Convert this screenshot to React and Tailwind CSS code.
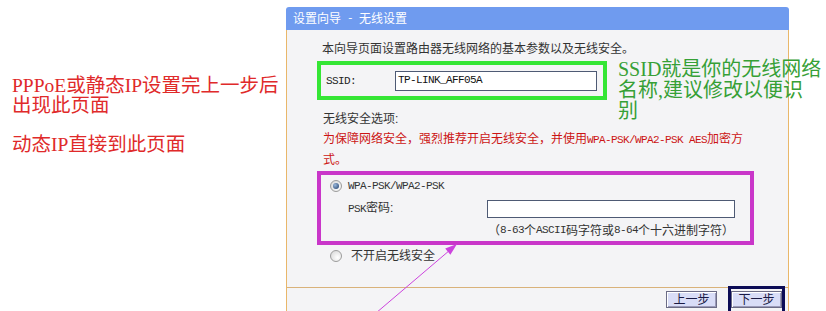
const M = ({ children }) => (
  <span className="font-['Liberation_Mono',monospace] text-[11px] tracking-[-0.6px]">{children}</span>
);

function Radio({ checked }) {
  return (
    <span className="flex h-[12px] w-[12px] shrink-0 items-center justify-center rounded-full border border-[#9c9c9c] bg-[radial-gradient(circle_at_65%_65%,#ffffff,#d4d4d4)]">
      {checked && (
        <span className="h-[6px] w-[6px] rounded-full bg-[radial-gradient(circle_at_35%_35%,#9ab8dc,#1d3b66)]" />
      )}
    </span>
  );
}

function Btn({ children }) {
  return (
    <div className="flex h-[17px] w-[51px] items-center justify-center border border-[#6c6c86] bg-[#d9ddf7] text-[12px] leading-none text-[#1a1a44] shadow-[inset_1px_1px_0_#ffffff,inset_-1px_-1px_0_#9a9ab8]">
      {children}
    </div>
  );
}

export default function App() {
  return (
    <div className="relative flex h-[311px] w-[826px] overflow-hidden bg-white">
      {/* left annotation */}
      <div className="w-[286px] shrink-0 pl-[12px] pt-[76px] font-['Liberation_Serif','Noto_Sans_CJK_SC',serif] text-[19.5px] leading-[20px] text-[#e02a2a]">
        <div className="whitespace-nowrap">PPPoE或静态IP设置完上一步后</div>
        <div className="whitespace-nowrap">出现此页面</div>
        <div className="mt-[19px] whitespace-nowrap">动态IP直接到此页面</div>
      </div>

      {/* panel */}
      <div className="mt-[7px] flex w-[503px] shrink-0 flex-col font-['Liberation_Sans','Noto_Sans_CJK_SC',sans-serif] text-[12px] text-[#333333]">
        <div className="flex h-[23px] items-center whitespace-pre rounded-t-[3px] bg-[#6f9bef] pl-[7px] leading-none text-white">
          <span>设置向导</span>
          <M>{"\u00a0-\u00a0"}</M>
          <span>无线设置</span>
        </div>
        <div className="flex flex-1 flex-col border-x border-[#e9b76a] bg-[#f4f4f6]">
          <div className="whitespace-nowrap pl-[35px] pt-[11px] leading-[16px]">
            本向导页面设置路由器无线网络的基本参数以及无线安全。
          </div>

          {/* SSID box */}
          <div className="ml-[30px] mt-[4px] flex h-[39px] w-[290px] items-center border-[4px] border-[#35e635] pl-[5px]">
            <span className="w-[69px] text-[#222]">
              <M>SSID:</M>
            </span>
            <div className="flex h-[20px] w-[202px] items-center border border-[#4e5a74] bg-white pl-[2px] text-[#111]">
              <M>TP-LINK_AFF05A</M>
            </div>
          </div>

          <div className="mt-[9px] pl-[36px] leading-[20px]">
            <div>无线安全选项:</div>
            <div className="whitespace-nowrap text-[#cc1414]">
              为保障网络安全，强烈推荐开启无线安全，并使用<M>WPA-PSK/WPA2-PSK AES</M>加密方
            </div>
            <div className="text-[#cc1414]">式。</div>
          </div>

          {/* WPA box */}
          <div className="ml-[30px] mt-[1px] flex w-[437px] flex-col border-[4px] border-[#c936c9]">
            <div className="flex h-[22px] items-center gap-[6px] pl-[9px]">
              <Radio checked />
              <M>WPA-PSK/WPA2-PSK</M>
            </div>
            <div className="flex h-[23px] items-center pl-[27px]">
              <span className="w-[139px] whitespace-nowrap">
                <M>PSK</M>密码:
              </span>
              <div className="h-[18px] w-[248px] border border-[#4e5a74] bg-white" />
            </div>
            <div className="flex h-[21px] items-center whitespace-nowrap pl-[167px]">
              （<M>8-63</M>个<M>ASCII</M>码字符或<M>8-64</M>个十六进制字符）
            </div>
          </div>

          <div className="flex h-[22px] items-center gap-[9px] pl-[43px]">
            <Radio />
            <span>不开启无线安全</span>
          </div>

          {/* footer */}
          <div className="mt-auto flex h-[24px] items-start justify-end border-t border-[#d9b27a] pr-[3px]">
            <div className="mt-[3px]">
              <Btn>上一步</Btn>
            </div>
            <div className="-mt-[2px] ml-[11px] h-[30px] border-[3px] border-[#0c0c56] pt-[2px]">
              <Btn>下一步</Btn>
            </div>
          </div>
        </div>
      </div>

      {/* green annotation */}
      <div className="absolute left-[618px] top-[59px] font-['Liberation_Serif','Noto_Sans_CJK_SC',serif] text-[20px] leading-[21px] text-[#36a036]">
        <div className="whitespace-nowrap">SSID就是你的无线网络</div>
        <div className="whitespace-nowrap">名称,建议修改以便识</div>
        <div>别</div>
      </div>

      {/* arrow */}
      <svg className="pointer-events-none absolute left-0 top-0" width="826" height="311" viewBox="0 0 826 311">
        <line x1="376" y1="313" x2="450" y2="250" stroke="#cc44dd" strokeWidth="1" />
        <polygon points="457,244 450.4,254.8 445.2,248.6" fill="#cc44dd" />
      </svg>
    </div>
  );
}
